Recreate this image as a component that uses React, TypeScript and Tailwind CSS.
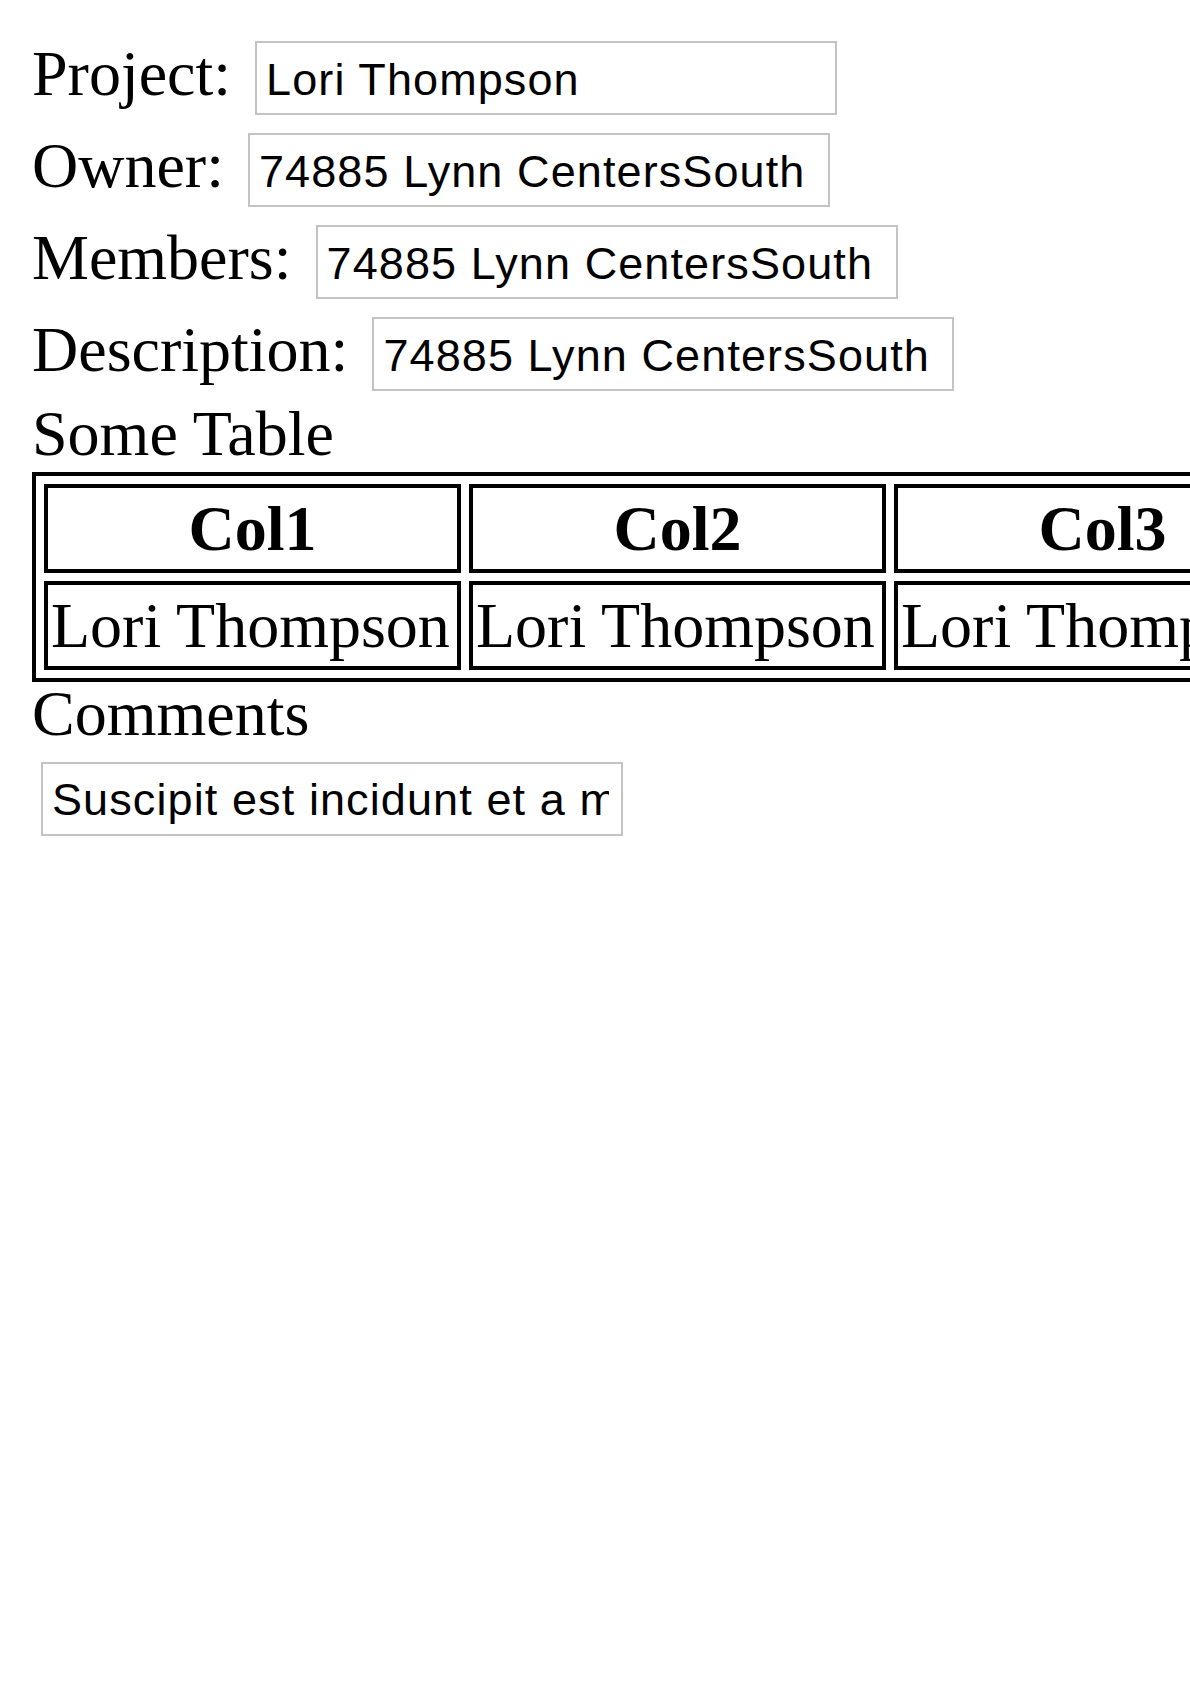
import React from "react";

const serif = { fontFamily: '"Liberation Serif", "Times New Roman", serif' };

interface Field {
  label: string;
  value: string;
}

const fields: Field[] = [
  { label: "Project:", value: "Lori Thompson" },
  { label: "Owner:", value: "74885 Lynn CentersSouth" },
  { label: "Members:", value: "74885 Lynn CentersSouth" },
  { label: "Description:", value: "74885 Lynn CentersSouth" },
];

const columns = ["Col1", "Col2", "Col3"];

function TextBox({ value }: { value: string }) {
  return (
    <input
      type="text"
      readOnly
      value={value}
      className="w-[582px] h-[74px] shrink-0 border-2 border-[#c3c3c3] bg-white pl-[9px] pr-[12px] pt-[3px] text-[45px] tracking-[1.1px] text-black font-['Liberation_Sans',Arial,sans-serif] outline-none"
    />
  );
}

export default function App() {
  return (
    <div className="min-h-screen w-full overflow-hidden bg-white pl-[32px] pt-[41px] text-black text-[64px] leading-[71px]" style={serif}>
      {/* Form fields */}
      <div className="flex flex-col gap-[18px]">
        {fields.map((f) => (
          <div key={f.label} className="flex items-start gap-[24px]">
            <span className="-mt-[3px] whitespace-nowrap">{f.label}</span>
            <TextBox value={f.value} />
          </div>
        ))}
      </div>

      <div className="mt-[7px]">Some Table</div>

      {/* Table */}
      <table className="mt-[3px] border-separate border-spacing-[8px] border-4 border-black">
        <thead>
          <tr>
            {columns.map((c) => (
              <th key={c} className="w-[417px] min-w-[417px] border-4 border-black px-[2px] py-[5px] text-center font-bold whitespace-nowrap">
                {c}
              </th>
            ))}
          </tr>
        </thead>
        <tbody>
          <tr>
            {columns.map((c) => (
              <td key={c} className="w-[417px] min-w-[417px] border-4 border-black px-[3px] py-[5px] text-left whitespace-nowrap">
                Lori Thompson
              </td>
            ))}
          </tr>
        </tbody>
      </table>

      <div className="-mt-[4px]">Comments</div>

      <div className="mt-[9px] ml-[9px]">
        <TextBox value="Suscipit est incidunt et a magni quia voluptatem" />
      </div>
    </div>
  );
}
